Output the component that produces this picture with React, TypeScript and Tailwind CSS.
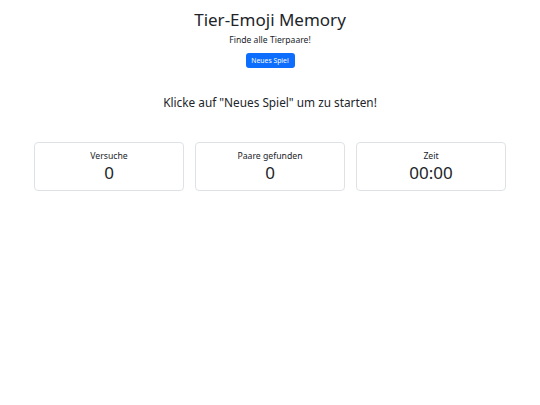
export default function App() {
  return (
    <div className="min-h-[405px] bg-white text-[#212529]" style={{ fontFamily: '"Noto Sans", sans-serif' }}>
      <div className="flex flex-col items-center pt-[8px]">
        <h1 className="text-[17px] leading-[24px] font-normal">Tier-Emoji Memory</h1>
        <p className="text-[8.6px] leading-[12px] mt-[2px]">Finde alle Tierpaare!</p>
        <button className="mt-[7px] bg-[#0d6efd] text-white text-[6.8px] leading-[15px] w-[49px] h-[15px] rounded-[3px]">Neues Spiel</button>
        <p className="text-[11.8px] leading-[18px] mt-[25px]">Klicke auf "Neues Spiel" um zu starten!</p>
      </div>
      <div className="mx-[34px] mt-[31px] grid grid-cols-3 gap-[11px]">
        {[
          ['Versuche', '0'],
          ['Paare gefunden', '0'],
          ['Zeit', '00:00'],
        ].map(([l, v]) => (
          <div key={l} className="border border-[#dee2e6] rounded-[4px] h-[49px] flex flex-col items-center pt-[7px]">
            <div className="text-[8.7px] leading-[12px]">{l}</div>
            <div className="text-[17px] leading-[22px]">{v}</div>
          </div>
        ))}
      </div>
    </div>
  );
}
